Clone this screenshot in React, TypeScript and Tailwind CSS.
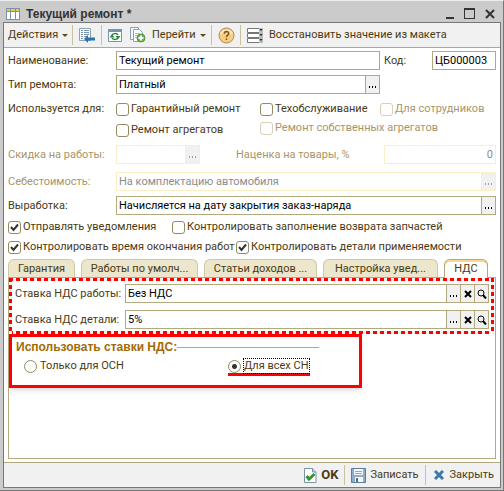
import React from "react";
import clsx from "clsx";

type FieldProps = {
  id: string;
  value: string;
  disabled?: boolean;
  actions?: Array<"pick" | "clear" | "search">;
  className?: string;
  align?: "left" | "right";
};

const actionNames = { pick: "Выбрать", clear: "Очистить", search: "Открыть" };

function Field({ id, value, disabled, actions = [], className, align }: FieldProps) {
  const line = disabled ? "border-[#fcefc5]" : "border-[#b3a97e]";
  return (
    <div className={clsx("flex h-[19px] border bg-white", line, className)}>
      <input
        id={id}
        defaultValue={value}
        disabled={disabled}
        className={clsx("min-w-0 flex-1 px-0.5 outline-none", align === "right" && "text-right", disabled ? "text-[#8c8c8c]" : "text-black")}
      />
      {actions.map((a) => (
        <button
          key={a}
          type="button"
          disabled={disabled}
          aria-label={actionNames[a]}
          className={clsx("box-content flex w-[13px] shrink-0 items-center justify-center border-l bg-[#f1f1f1]", line, disabled ? "text-[#a0a0a0]" : "text-black")}
        >
          {a === "pick" && (
            <svg width="9" height="9" viewBox="0 0 9 9" fill="currentColor"><path d="M1 6h1v2H1zM4 6h1v2H4zM7 6h1v2H7z" /></svg>
          )}
          {a === "clear" && (
            <svg width="8" height="8" viewBox="0 0 8 8" stroke="currentColor" strokeWidth="2"><path d="M1 1l6 6M7 1l-6 6" /></svg>
          )}
          {a === "search" && (
            <svg width="10" height="10" viewBox="0 0 10 10" fill="none" stroke="currentColor">
              <circle cx="4" cy="4" r="3" />
              <path strokeWidth="2" d="M6 6l3 3.500" />
            </svg>
          )}
        </button>
      ))}
    </div>
  );
}

function Check({ label, checked, disabled, className }: { label: string; checked?: boolean; disabled?: boolean; className?: string }) {
  return (
    <label className={clsx("flex h-3.5 items-center gap-0.5 whitespace-nowrap", disabled && "text-[#a8956a]", className)}>
      <span className="relative flex size-[13px]">
        <input
          type="checkbox"
          defaultChecked={checked}
          disabled={disabled}
          className={clsx("peer size-[13px] appearance-none rounded-[3px] border bg-white", disabled ? "border-[#d6d0b8]" : "border-[#968a5f]")}
        />
        <svg className="pointer-events-none absolute inset-0 hidden peer-checked:block" width="13" height="13" viewBox="0 0 13 13" fill="none" stroke="#333" strokeWidth="2">
          <path d="M3 6l2.5 3L10 3.5" />
        </svg>
      </span>
      {label}
    </label>
  );
}

function Radio({ label, checked, className }: { label: string; checked?: boolean; className?: string }) {
  return (
    <label className={clsx("flex h-3.5 items-center gap-0.5 whitespace-nowrap", className)}>
      <input
        type="radio"
        name="vat-scope"
        defaultChecked={checked}
        className="peer size-[13px] appearance-none rounded-full border border-[#968a5f] bg-white bg-[radial-gradient(circle,#333_0_2px,transparent_3px)] not-checked:bg-none"
      />
      <span className="border border-transparent peer-checked:border-dotted peer-checked:border-black">{label}</span>
    </label>
  );
}

function Divider() {
  return <span className="h-5 w-px shrink-0 bg-[#c9c29f]" />;
}

function Caret() {
  return <span className="border-x-3 border-t-3 border-x-transparent border-t-[#5a4a1c]" />;
}

function TableIcon() {
  return (
    <svg width="14" height="12" viewBox="0 0 14 12">
      <path fill="#7d93a8" d="M0 0h14v12H0z" />
      <path fill="#fff" d="M1 4h3v7H1zM5 4h4v7H5zM10 4h3v7h-3z" />
      <path fill="#f3c64b" d="M1 1h3v2H1zM5 1h4v2H5zM10 1h3v2h-3z" />
    </svg>
  );
}

function ListBackIcon() {
  return (
    <svg width="16" height="15" viewBox="0 0 16 15">
      <path fill="#f7fafc" stroke="#8ba3b8" d="M.5.5h11v12H.5z" />
      <path stroke="#7895ad" d="M2 2.5h2M5 2.5h5M2 4.5h2M5 4.5h5M2 6.5h2M5 6.5h5M2 8.5h2M5 8.5h3M2 10.5h2" />
      <path fill="#2d73ab" d="M5 11l4-4v2.500h7v3H9V15z" />
    </svg>
  );
}

function RefreshIcon() {
  return (
    <svg width="14" height="13" viewBox="0 0 14 13">
      <path fill="#fff" stroke="#7595b2" d="M.5.5h13v12H.5z" />
      <path fill="#7595b2" d="M0 0h14v3H0z" />
      <path fill="none" stroke="#268439" strokeWidth="1.5" d="M4 7c0-3 5-3 6-1M10 8c0 3-5 3-6 1" />
      <path fill="#268439" d="M1.500 8.500h5L4 5.500zM12.500 7h-5L10 10z" />
    </svg>
  );
}

function CopyAddIcon() {
  return (
    <svg width="16" height="16" viewBox="0 0 16 16">
      <path fill="#f4f8fa" stroke="#8ca2b4" d="M.5.5h8v12h-8z" />
      <path fill="#fff" stroke="#8ca2b4" d="M3.5 2.5h6l3 3v9h-9z" />
      <path stroke="#a9bbc9" d="M5 6.5h5M5 8.5h4M5 10.5h2" />
      <circle cx="11" cy="11" r="4" fill="#6bb350" stroke="#4d9a3c" />
      <path stroke="#fff" strokeWidth="2" d="M8.5 11h5M11 8.5v5" />
    </svg>
  );
}

function HelpIcon() {
  return (
    <svg width="17" height="17" viewBox="0 0 17 17" fill="none">
      <circle cx="8.5" cy="8.5" r="7.5" fill="#f9cd80" stroke="#a98a5c" />
      <path d="M3 7a6 6 0 0 1 11 0" stroke="#fde9bf" strokeWidth="2" />
      <path d="M6.3 6.7c0-3 4.4-3 4.4-.2 0 1.7-2.2 1.6-2.2 3.8M8.5 11.5v1.5" stroke="#7d5522" strokeWidth="1.5" />
    </svg>
  );
}

function RowsIcon() {
  return (
    <svg width="16" height="15" viewBox="0 0 16 15">
      {[0, 5, 10].map((y) => (
        <g key={y} transform={`translate(0 ${y})`}>
          <path fill="#fff" stroke="#777" d="M.5.5h12v4H.5z" />
          <path fill="#bbb" d="M12 0h4v5h-4z" />
          <path fill="#222" d="M12.500 1h3L14 3z" />
        </g>
      ))}
    </svg>
  );
}

function OkIcon() {
  return (
    <svg width="13" height="15" viewBox="0 0 13 15">
      <path fill="#fff" stroke="#7893aa" d="M.5.5h8l3.500 3.500v10.500H.5z" />
      <path fill="#c8d6e1" stroke="#7893aa" d="M8.500.5V4H12" />
      <path fill="none" stroke="#38942d" strokeWidth="3" d="M2.500 8l2.500 3 5.500-5" />
    </svg>
  );
}

function SaveIcon() {
  return (
    <svg width="15" height="15" viewBox="0 0 15 15">
      <path fill="#8fadc6" stroke="#5a7d9b" d="M.5.5h14v14H.5z" />
      <path fill="#f5f9fc" d="M3 1h9v6H3zM4 9h8v5H4z" />
      <path stroke="#91a9bc" d="M4 3.500h7M4 5.500h7" />
      <path fill="#55718a" d="M5 10h2v4H5z" />
    </svg>
  );
}

const tabs = [
  { title: "Гарантия", width: "w-[67px]" },
  { title: "Работы по умолч...", width: "w-[117px]" },
  { title: "Статьи доходов ...", width: "w-[113px]" },
  { title: "Настройка увед...", width: "w-[115px]" },
  { title: "НДС", width: "w-11", active: true },
];

function VatPanel() {
  return (
    <div className="flex-1 border border-[#b3a97e]">
      <div className="relative flex flex-col gap-[7px] px-1.5 pt-1.5 pb-[5px]">
        {/* dashed highlight round the rates */}
        <div className="pointer-events-none absolute inset-y-0 left-0 right-px">
          <div className="absolute inset-x-0 top-0 h-[3px] bg-[repeating-linear-gradient(90deg,red_0_4px,#f1f1f1_4px_7px)]" />
          <div className="absolute inset-x-0 bottom-0 h-[3px] bg-[repeating-linear-gradient(90deg,red_0_4px,#f1f1f1_4px_7px)]" />
          <div className="absolute inset-y-0 left-0 w-[3px] bg-[repeating-linear-gradient(180deg,red_0_4px,#f1f1f1_4px_7px)]" />
          <div className="absolute inset-y-0 right-0 w-[3px] bg-[repeating-linear-gradient(180deg,red_0_4px,#f1f1f1_4px_7px)]" />
        </div>
        <div className="flex items-center">
          <label htmlFor="vat-work" className="w-[110px] shrink-0 whitespace-nowrap">Ставка НДС работы:</label>
          <Field id="vat-work" value="Без НДС" actions={["pick", "clear", "search"]} className="flex-1" />
        </div>
        <div className="flex items-center">
          <label htmlFor="vat-parts" className="w-[110px] shrink-0 whitespace-nowrap">Ставка НДС детали:</label>
          <Field id="vat-parts" value="5%" actions={["pick", "clear", "search"]} className="flex-1" />
        </div>
      </div>
      <div role="radiogroup" aria-labelledby="vat-title" className="h-[54px] w-[353px] border-3 border-[#f00] px-1 pt-0.5 shadow-md">
        <div className="flex items-center">
          <span id="vat-title" className="font-['Liberation_Sans',sans-serif] text-xs leading-4 font-bold text-[#a36a08]">Использовать ставки НДС:</span>
          <span className="mr-9 h-px flex-1 bg-[#b3a97e]" />
        </div>
        <div className="mt-1 flex pl-2">
          <Radio label="Только для ОСН" className="w-[204px]" />
          <div className="border-b-3 border-[#f00]">
            <Radio label="Для всех СН" checked />
          </div>
        </div>
      </div>
    </div>
  );
}

export default function App() {
  return (
    <div className="flex min-h-screen flex-col border-t border-r border-b border-t-[#eee] border-r-[#777] border-b-[#777] bg-[#cbcbcb] pr-0.5 pb-0.5 pl-[3px] font-[Roboto,'Noto_Sans',sans-serif] text-[11px] leading-[14px] text-[#4a3a12]">
      <header className="flex h-[21px] items-center pt-1 pr-1.5 pl-[3px]">
        <TableIcon />
        <h1 className="ml-1.5 flex-1 font-['Liberation_Sans',sans-serif] text-xs font-bold text-[#333]">Текущий ремонт *</h1>
        <div className="flex items-center gap-2.5 text-[#222]">
          <button type="button" aria-label="Свернуть" className="flex h-[11px] w-2 items-end"><span className="h-0.5 w-full bg-[#333]" /></button>
          <button type="button" aria-label="Развернуть" className="h-[11px] w-[11px] border border-t-2 border-[#333]" />
          <button type="button" aria-label="Закрыть окно">
            <svg width="10" height="10" viewBox="0 0 10 10" stroke="#333" strokeWidth="2"><path d="M1 1l8 8M9 1L1 9" /></svg>
          </button>
        </div>
      </header>
      <main className="flex flex-1 flex-col border border-[#777] bg-white">
        <nav className="flex h-[25px] items-center border-b border-[#b3a97e] bg-[#f1f1f1] pl-1">
          <button type="button" className="flex w-16 items-center gap-1">Действия<Caret /></button>
          <Divider />
          <button type="button" aria-label="Записать и перейти к списку" className="flex w-7 justify-center"><ListBackIcon /></button>
          <Divider />
          <button type="button" aria-label="Обновить" className="ml-1.5"><RefreshIcon /></button>
          <button type="button" aria-label="Скопировать" className="ml-2"><CopyAddIcon /></button>
          <button type="button" className="ml-1.5 flex w-[59px] items-center gap-1">Перейти<Caret /></button>
          <Divider />
          <button type="button" aria-label="Справка" className="flex w-7 justify-center"><HelpIcon /></button>
          <Divider />
          <button type="button" className="ml-1.5 flex items-center gap-1.5 whitespace-nowrap"><RowsIcon />Восстановить значение из макета</button>
        </nav>

        <form className="flex flex-1 flex-col px-1 pt-[3px] pb-[3px]">
          <div className="flex items-center">
            <label htmlFor="name" className="w-27 shrink-0">Наименование:</label>
            <Field id="name" value="Текущий ремонт" className="flex-1" />
            <label htmlFor="code" className="w-[52px] pl-1">Код:</label>
            <Field id="code" value="ЦБ000003" className="w-16" />
          </div>
          <div className="mt-[5px] flex items-center">
            <label htmlFor="kind" className="w-27 shrink-0">Тип ремонта:</label>
            <Field id="kind" value="Платный" actions={["pick"]} className="mr-29 flex-1" />
          </div>
          <div className="mt-2 flex">
            <span className="w-27 shrink-0">Используется для:</span>
            <div className="flex w-36 flex-col gap-[7px]">
              <Check label="Гарантийный ремонт" />
              <Check label="Ремонт агрегатов" />
            </div>
            <div className="flex flex-col gap-[5px]">
              <div className="flex">
                <Check label="Техобслуживание" className="w-30" />
                <Check label="Для сотрудников" disabled />
              </div>
              <Check label="Ремонт собственных агрегатов" disabled />
            </div>
          </div>
          <div className="mt-2 flex items-center text-[#a8956a]">
            <label htmlFor="discount" className="w-27 shrink-0 whitespace-nowrap">Скидка на работы:</label>
            <Field id="discount" value="" disabled actions={["pick"]} className="w-21 shrink-0" />
            <label htmlFor="markup" className="w-[184px] shrink-0 pl-9 whitespace-nowrap">Наценка на товары, %</label>
            <Field id="markup" value="0" disabled align="right" className="min-w-0 flex-1" />
          </div>
          <div className="mt-2 flex items-center text-[#a8956a]">
            <label htmlFor="cost" className="w-27 shrink-0">Себестоимость:</label>
            <Field id="cost" value="На комплектацию автомобиля" disabled actions={["pick"]} className="flex-1" />
          </div>
          <div className="mt-[5px] flex items-center">
            <label htmlFor="output" className="w-27 shrink-0">Выработка:</label>
            <Field id="output" value="Начисляется на дату закрытия заказ-наряда" actions={["pick"]} className="flex-1" />
          </div>
          <div className="mt-[5px] flex">
            <Check label="Отправлять уведомления" checked className="w-41" />
            <Check label="Контролировать заполнение возврата запчастей" />
          </div>
          <div className="mt-1.5 flex">
            <Check label="Контролировать время окончания работ" checked className="w-57" />
            <Check label="Контролировать детали применяемости" checked />
          </div>

          <div role="tablist" className="mt-[5px] flex gap-1.5">
            {tabs.map((t) => (
              <button
                key={t.title}
                type="button"
                role="tab"
                aria-selected={!!t.active}
                className={clsx(
                  "h-[18px] rounded-t-md border border-b-0 text-center whitespace-nowrap",
                  t.width,
                  t.active ? "relative -mb-px h-[19px] border-[#b3a97e] bg-white shadow-[inset_0_2px_0_#fbd795]" : "border-[#cfc8a2] bg-[#ebe6cc]"
                )}
              >
                {t.title}
              </button>
            ))}
          </div>
          <VatPanel />
        </form>

        <footer className="flex h-[25px] items-center justify-end border-t border-[#b3a97e] bg-[#f1f1f1] pr-1.5">
          <button type="button" className="flex items-center gap-1 pr-1.5 text-[13px] font-bold"><OkIcon />OK</button>
          <Divider />
          <button type="button" className="flex items-center gap-1 px-1.5"><SaveIcon />Записать</button>
          <Divider />
          <button type="button" className="flex items-center gap-1.5 pl-2">
            <svg width="10" height="10" viewBox="0 0 10 10" stroke="#3f78ab" strokeWidth="3"><path d="M1 1l8 8M9 1L1 9" /></svg>
            Закрыть
          </button>
        </footer>
      </main>
    </div>
  );
}
